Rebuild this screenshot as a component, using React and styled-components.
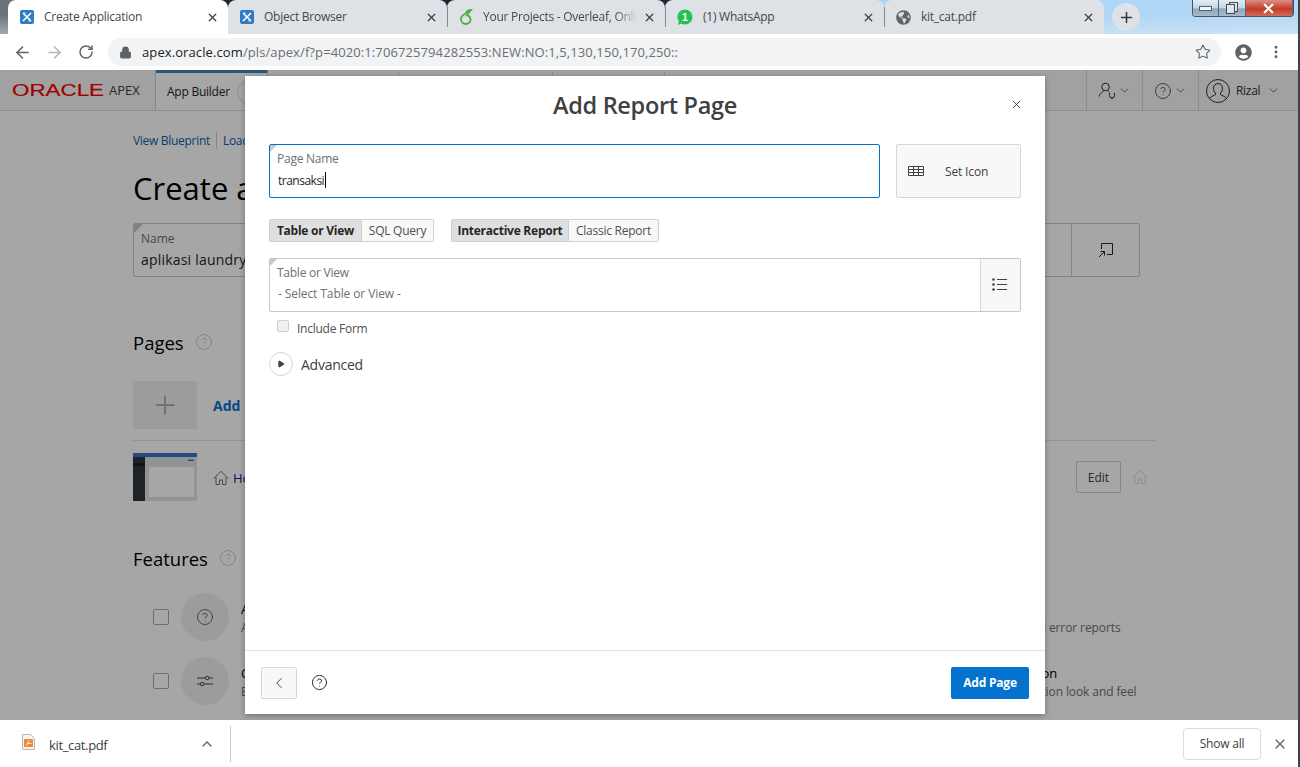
import React from 'react';
import styled, { createGlobalStyle, css } from 'styled-components';
import { ArrowLeft, ArrowRight, RotateCw, Lock, Star, EllipsisVertical, Plus, X, ChevronDown, ChevronLeft, ChevronUp, CircleHelp, Play } from 'lucide-react';
import { FaGlobeAmericas, FaUserCircle } from 'react-icons/fa';

const FONT = '"Open Sans", "Noto Sans", "Liberation Sans", sans-serif';

const GlobalStyle = createGlobalStyle`
  html, body { margin: 0; padding: 0; background: #fff; overflow: hidden; }
  * { box-sizing: border-box; }
  body { font-family: ${FONT}; font-size: 12px; color: #404040; }
`;

const Window = styled.div`
  width: 1300px;
  height: 767px;
  display: flex;
  flex-direction: column;
  overflow: hidden;
  border-right: 2px solid #3d4449;
`;

/* browser chrome */
const TabStrip = styled.div`
  height: 34px;
  flex: none;
  display: flex;
  align-items: flex-start;
  padding-left: 8px;
  background:
    linear-gradient(180deg, transparent 45%, rgba(232, 236, 240, 0.45) 100%),
    linear-gradient(90deg, #6c7379 0, #6c7379 8px, #1b2735 17%, #1b2735 51%, #a8d4fa 68%, #b4d8f6 100%);
`;

const Tab = styled.div`
  position: relative;
  width: ${({ $w }) => $w}px;
  height: 34px;
  flex: none;
  display: flex;
  align-items: center;
  padding: 0 9px 0 12px;
  gap: 10px;
  border-radius: 8px 8px 0 0;
  background: ${({ $active }) => ($active ? '#fff' : '#dee1e6')};
  ${({ $sep }) => $sep && css`
    &::before {
      content: '';
      position: absolute;
      left: 0;
      top: 7px;
      height: 20px;
      width: 1px;
      background: #85888c;
    }
  `}
`;

const TabTitle = styled.span`
  flex: 1;
  min-width: 0;
  font-size: 12px;
  line-height: 16px;
  letter-spacing: -0.25px;
  color: #45484c;
  white-space: nowrap;
  overflow: hidden;
  ${({ $fade }) => $fade && css`
    mask-image: linear-gradient(90deg, #000 85%, transparent 100%);
  `}
`;

const TabClose = styled(X)`
  flex: none;
  width: 13px;
  height: 13px;
  margin-left: -5px;
  color: #3c4043;
`;

const NewTab = styled.div`
  width: 28px;
  height: 28px;
  margin: 3px 0 0 8px;
  border-radius: 50%;
  background: #dee1e6;
  display: flex;
  align-items: center;
  justify-content: center;
  color: #35383c;
`;

const WindowControls = styled.div`
  margin-left: auto;
  margin-right: 4px;
  height: 17px;
  width: 102px;
  display: flex;
  overflow: hidden;
  border: 1px solid #4b5560;
  border-top: none;
  border-radius: 0 0 4px 4px;
`;

const WindowButton = styled.div`
  width: ${({ $wide }) => ($wide ? '48px' : '27px')};
  display: flex;
  align-items: center;
  justify-content: center;
  border-right: 1px solid #5d6a77;
  background: ${({ $wide }) => ($wide
    ? 'linear-gradient(180deg, #dc8f83 0, #c43c2a 55%, #cf6a58 100%)'
    : 'linear-gradient(180deg, #e3edf6 0, #c4d5e4 50%, #90a7bd 55%, #a6bacb 100%)')};
`;

const Toolbar = styled.div`
  height: 36px;
  flex: none;
  display: flex;
  align-items: center;
  background: #fff;
  padding: 0 0 0 12px;
`;

const NavButton = styled.div`
  width: 20px;
  height: 20px;
  margin-right: 12px;
  display: flex;
  align-items: center;
  justify-content: center;
  color: ${({ $off }) => ($off ? '#b4b6b9' : '#5f6368')};
`;

const Omnibox = styled.div`
  width: 1113px;
  height: 28px;
  padding: 0 10px 0 11px;
  display: flex;
  align-items: center;
  border-radius: 14px;
  background: #f1f3f4;
  color: #5f6368;
`;

const Url = styled.span`
  flex: 1;
  margin-left: 10px;
  font-size: 13px;
  letter-spacing: 0.1px;
  white-space: nowrap;
  color: #6a6e72;
  b { font-weight: 400; color: #202124; }
`;

const ToolbarIcon = styled.div`
  width: 20px;
  margin-left: ${({ $gap }) => $gap || 12}px;
  display: flex;
  justify-content: center;
  color: #5f6368;
`;

/* page behind the dialog */
const Page = styled.div`
  position: relative;
  height: 650px;
  flex: none;
  overflow: hidden;
  background: #fff;
`;

const Scrim = styled.div`
  position: absolute;
  inset: 0;
  background: rgba(0, 0, 0, 0.35);
`;

const AppHeader = styled.div`
  height: 41px;
  display: flex;
  align-items: stretch;
  background: #f8f8f8;
  border-bottom: 1px solid #d8d8d8;
`;

const LogoCell = styled.div`
  width: 156px;
  display: flex;
  align-items: center;
  padding-left: 12px;
  border-right: 1px solid #d0d0d0;
  color: #404040;
  font-size: 13px;
  span { margin-left: 5px; letter-spacing: 0; }
`;

const NavTab = styled.div`
  width: ${({ $w }) => $w}px;
  display: flex;
  align-items: center;
  gap: 7px;
  padding: 0 11px;
  font-size: 12px;
  letter-spacing: -0.25px;
  color: #262626;
  background: ${({ $active }) => ($active ? '#fff' : 'transparent')};
  border-right: 1px solid #d0d0d0;
  border-top: 3px solid ${({ $active }) => ($active ? '#3f85c2' : 'transparent')};
  white-space: nowrap;
`;

const NavChevron = styled.span`
  width: 24px;
  height: 24px;
  flex: none;
  display: flex;
  align-items: center;
  justify-content: center;
  border: 1px solid #d8d8d8;
  border-radius: 50%;
`;

const HeaderRight = styled.div`
  margin-left: auto;
  display: flex;
`;

const HeaderCell = styled.div`
  width: ${({ $w }) => $w}px;
  display: flex;
  align-items: center;
  gap: ${({ $gap }) => $gap || 2}px;
  padding: 1px 0 0 ${({ $pad }) => $pad}px;
  border-left: 1px solid #d8d8d8;
  color: #303030;
  font-size: 12px;
  letter-spacing: -0.3px;
`;

const Main = styled.div`
  width: 1023px;
  margin-left: 133px;
  padding-top: 19px;
`;

const Crumbs = styled.div`
  height: 20px;
  display: flex;
  align-items: center;
  font-size: 12px;
  letter-spacing: -0.3px;
  color: #0b5fa5;
  a + a {
    margin-left: 6px;
    padding-left: 6px;
    border-left: 1px solid #ccc;
  }
`;

const PageTitle = styled.h1`
  margin: 18px 0 0;
  font-size: 31px;
  line-height: 40px;
  font-weight: 400;
  color: #000;
`;

const NameField = styled.div`
  position: relative;
  width: 1007px;
  height: 54px;
  margin-top: 15px;
  display: flex;
  border: 1px solid #c8c8c8;
  border-radius: 2px;
  &::before {
    content: '';
    position: absolute;
    left: 0;
    top: 0;
    border-top: 9px solid #c8c8c8;
    border-right: 9px solid transparent;
  }
`;

const NameText = styled.div`
  flex: 1;
  padding: 7px 7px;
  label { display: block; font-size: 12px; line-height: 16px; color: #707070; }
  div { margin-top: 1px; font-size: 14px; line-height: 24px; letter-spacing: 0.2px; color: #262626; }
`;

const NameAction = styled.div`
  width: 68px;
  display: flex;
  align-items: center;
  justify-content: center;
  border-left: 1px solid #c8c8c8;
`;

const SectionHead = styled.div`
  display: flex;
  align-items: center;
  gap: 11px;
  height: 28px;
  margin-top: ${({ $top }) => $top}px;
  font-size: 18.5px;
  color: #000;
`;

const AddRow = styled.div`
  display: flex;
  align-items: center;
  gap: 16px;
  margin-top: 25px;
  padding-bottom: 11px;
  border-bottom: 1px solid #e4e4e4;
  font-size: 14px;
  font-weight: 700;
  word-spacing: 3px;
  color: #0572ce;
`;

const AddTile = styled.div`
  width: 64px;
  height: 48px;
  display: flex;
  align-items: center;
  justify-content: center;
  background: #f0f0f0;
  color: #a8a8a8;
`;

const HomeRow = styled.div`
  display: flex;
  align-items: center;
  margin-top: 12px;
  padding-right: 8px;
`;

const HomeLink = styled.div`
  display: flex;
  align-items: center;
  gap: 4px;
  margin-left: 16px;
  padding-top: 1px;
  font-size: 13px;
  color: #4b0082;
`;

const EditButton = styled.div`
  width: 45px;
  height: 32px;
  margin-left: auto;
  margin-right: 11px;
  display: flex;
  align-items: center;
  justify-content: center;
  border: 1px solid #cfcfcf;
  border-radius: 2px;
  font-size: 12px;
  color: #404040;
`;

const FeatureGrid = styled.div`
  display: grid;
  grid-template-columns: 684px 1fr;
  row-gap: 16px;
  margin-top: 21px;
  padding-left: 20px;
`;

const Feature = styled.div`
  display: flex;
  align-items: center;
  height: 48px;
`;

const FeatureCheck = styled.div`
  width: 16px;
  height: 16px;
  flex: none;
  border: 1px solid #aaa;
  border-radius: 2px;
  background: #fff;
`;

const FeatureBadge = styled.div`
  width: 48px;
  height: 48px;
  flex: none;
  margin: 0 12px;
  display: flex;
  align-items: center;
  justify-content: center;
  border-radius: 50%;
  background: #f0f0f0;
  color: #404040;
`;

const FeatureText = styled.div`
  margin-top: 4px;
  white-space: nowrap;
  strong { display: block; font-weight: 400; font-size: 13px; line-height: 18px; color: #000; }
  span { display: block; font-size: 12px; line-height: 20px; color: #707070; letter-spacing: -0.1px; }
`;

/* dialog */
const Dialog = styled.div`
  position: absolute;
  left: 245px;
  top: 6px;
  width: 800px;
  height: 638px;
  display: flex;
  flex-direction: column;
  background: #fff;
  box-shadow: 0 2px 6px rgba(0, 0, 0, 0.3);
`;

const DialogHead = styled.div`
  position: relative;
  height: 60px;
  flex: none;
  display: flex;
  align-items: center;
  justify-content: center;
`;

const DialogTitle = styled.h2`
  margin: 0 0 2px;
  font-size: 23.5px;
  line-height: 58px;
  font-weight: 600;
  letter-spacing: -0.3px;
  color: #404040;
`;

const DialogClose = styled(X)`
  position: absolute;
  right: 22px;
  top: 22px;
  width: 13px;
  height: 13px;
  color: #262626;
`;

const DialogBody = styled.div`
  flex: 1;
  padding: 8px 24px 0;
`;

const TopRow = styled.div`
  display: flex;
  gap: 16px;
`;

const Field = styled.div`
  position: relative;
  flex: 1;
  height: 54px;
  display: flex;
  border: 1px solid ${({ $focus }) => ($focus ? '#0572ce' : '#c8c8c8')};
  border-radius: 2px;
  margin-top: ${({ $top }) => $top || 0}px;
  &::before {
    content: '';
    position: absolute;
    left: 0;
    top: 0;
    border-top: 7px solid #c8c8c8;
    border-right: 7px solid transparent;
  }
`;

const FieldMain = styled.div`
  flex: 1;
  padding: 6px 7px 0;
`;

const FieldLabel = styled.div`
  font-size: 12px;
  line-height: 16px;
  letter-spacing: -0.25px;
  color: #707070;
`;

const FieldValue = styled.div`
  display: flex;
  align-items: center;
  height: 22px;
  margin-top: ${({ $muted }) => ($muted ? 1 : 2)}px;
  padding-left: 1px;
  font-size: 12px;
  letter-spacing: ${({ $muted }) => ($muted ? '-0.1px' : '-0.5px')};
  color: ${({ $muted }) => ($muted ? '#707070' : '#262626')};
`;

const Caret = styled.span`
  width: 1px;
  height: 16px;
  margin-left: 1px;
  background: #000;
`;

const PickerButton = styled.div`
  width: 40px;
  display: flex;
  align-items: center;
  justify-content: center;
  padding: 0 2px 2px 0;
  background: #f8f8f8;
  border-left: 1px solid #d8d8d8;
  color: #404040;
`;

const IconButton = styled.div`
  width: 125px;
  height: 54px;
  display: flex;
  align-items: center;
  gap: 21px;
  padding-left: 11px;
  background: #f8f8f8;
  border: 1px solid #d8d8d8;
  border-radius: 2px;
  font-size: 12px;
  letter-spacing: -0.15px;
  color: #404040;
`;

const RadioRow = styled.div`
  display: flex;
  gap: 17px;
  margin-top: 21px;
`;

const RadioGroup = styled.div`
  display: flex;
  height: 23px;
`;

const Radio = styled.div`
  width: ${({ $w }) => $w}px;
  display: flex;
  align-items: center;
  justify-content: center;
  font-size: 12px;
  letter-spacing: -0.25px;
  white-space: nowrap;
  border: 1px solid #d0d0d0;
  ${({ $on }) => ($on
    ? css`
      font-weight: 700;
      color: #262626;
      background: #dfdfdf;
      border-radius: 2px 0 0 2px;
    `
    : css`
      color: #505050;
      background: #f8f8f8;
      border-left: none;
      border-radius: 0 2px 2px 0;
    `)}
`;

const CheckRow = styled.div`
  display: flex;
  align-items: flex-start;
  gap: 8px;
  height: 16px;
  margin: 8px 0 0 8px;
  font-size: 12px;
  line-height: 18px;
  letter-spacing: -0.25px;
  color: #505050;
`;

const CheckBox = styled.span`
  width: 12px;
  height: 12px;
  border: 1px solid #d0d0d0;
  border-radius: 2px;
  background: #f0f0f0;
`;

const Advanced = styled.div`
  display: flex;
  align-items: center;
  gap: 8px;
  margin-top: 16px;
  font-size: 14px;
  letter-spacing: -0.25px;
  color: #404040;
`;

const AdvancedToggle = styled.div`
  width: 24px;
  height: 24px;
  display: flex;
  align-items: center;
  justify-content: center;
  border: 1px solid #d8d8d8;
  border-radius: 50%;
  color: #404040;
`;

const DialogFoot = styled.div`
  height: 64px;
  flex: none;
  display: flex;
  align-items: center;
  padding: 0 16px;
  border-top: 1px solid #e4e4e4;
`;

const BackButton = styled.div`
  width: 36px;
  height: 32px;
  display: flex;
  align-items: center;
  justify-content: center;
  background: #f8f8f8;
  border: 1px solid #d8d8d8;
  border-radius: 2px;
  color: #303030;
`;

const HelpButton = styled.div`
  margin-left: 14px;
  display: flex;
  color: #1c1c1c;
`;

const PrimaryButton = styled.div`
  width: 78px;
  height: 32px;
  margin-left: auto;
  display: flex;
  align-items: center;
  justify-content: center;
  background: #0572ce;
  border-radius: 2px;
  color: #fff;
  font-size: 12px;
  font-weight: 700;
  letter-spacing: -0.2px;
`;

/* download shelf */
const Shelf = styled.div`
  height: 47px;
  flex: none;
  display: flex;
  align-items: center;
  background: #fff;
  padding-left: 22px;
`;

const ShelfFile = styled.div`
  width: 208px;
  display: flex;
  align-items: center;
  padding-right: 15px;
  font-size: 13px;
  letter-spacing: -0.35px;
  color: #3c4043;
  span { margin-left: 14px; padding-top: 3px; flex: 1; }
`;

const ShelfDivider = styled.div`
  width: 1px;
  height: 36px;
  background: #c8c8c8;
`;

const ShowAll = styled.div`
  width: 78px;
  height: 32px;
  margin-left: auto;
  display: flex;
  align-items: center;
  justify-content: center;
  border: 1px solid #dadce0;
  border-radius: 4px;
  font-size: 12px;
  letter-spacing: -0.2px;
  color: #3c4043;
`;

const ShelfClose = styled.div`
  width: 37px;
  display: flex;
  justify-content: center;
  color: #5f6368;
`;

function ApexIcon() {
  return (
    <svg width="14" height="14" viewBox="0 0 14 14" style={{ flex: 'none' }}>
      <rect width="14" height="14" rx="2" fill="#2f7cc4" />
      <path d="M3 3l8 8M11 3l-8 8" stroke="#fff" strokeWidth="1.6" />
      <path d="M3 3h3M8 11h3" stroke="#bfe0ff" strokeWidth="1" />
    </svg>
  );
}

function OverleafIcon() {
  return (
    <svg width="14" height="16" viewBox="0 0 14 16" style={{ flex: 'none' }}>
      <path d="M12 1C9 1.500 7 3 6.200 5 3.500 6 2 8 2 10.300 2 13 4.200 15 6.800 15c2.700 0 4.700-2 4.700-4.500 0-2-1.500-3.700-3.500-4.200 .8-1.500 2-3 4-5.300z" fill="none" stroke="#4cae3a" strokeWidth="1.8" />
    </svg>
  );
}

function WhatsappIcon() {
  return (
    <svg width="16" height="17" viewBox="0 0 16 17" style={{ flex: 'none' }}>
      <path d="M8 .5a7.500 7.500 0 0 1 0 15c-1.300 0-2.500-.3-3.500-.9L.8 16l1.100-3.600A7.500 7.500 0 0 1 8 .5z" fill="#25c151" />
      <text x="8" y="12" textAnchor="middle" fontSize="10.500" fontWeight="700" fontFamily="Liberation Sans" fill="#fff">1</text>
    </svg>
  );
}

function OracleLogo() {
  return (
    <svg width="92" height="16" viewBox="0 0 92 16" style={{ flex: 'none' }}>
      <text x="0" y="13.500" fontFamily="Liberation Sans" fontSize="16" textLength="92" lengthAdjust="spacingAndGlyphs" fill="#f80000" stroke="#f80000" strokeWidth="0.2">ORACLE</text>
    </svg>
  );
}

function UserWrench() {
  return (
    <svg width="18" height="18" viewBox="0 0 18 18" fill="none" stroke="currentColor" strokeWidth="1">
      <circle cx="7.500" cy="5" r="3.800" />
      <path d="M5.500 8.500c0 2-4 2-4.500 6M9.500 8.500c.3.900 1.200 1.300 2 1.800" />
      <path d="M11.500 11v2.500a2.500 2.500 0 0 0 5 0V11M14 16v1.500" />
    </svg>
  );
}

function Avatar() {
  return (
    <svg width="24" height="24" viewBox="0 0 24 24" fill="none" stroke="currentColor" strokeWidth="1">
      <circle cx="12" cy="12" r="11.500" />
      <path d="M12 4.500c-2.800 0-4.500 2-4.500 4.800 0 2 .8 3.700 2 4.700v1.600c-1 1-4.500 1.300-5.500 3.600M12 4.500c2.800 0 4.500 2 4.500 4.800 0 2-.8 3.700-2 4.700v1.600c1 1 4.500 1.300 5.500 3.600" />
    </svg>
  );
}

function PopOut() {
  return (
    <svg width="16" height="16" viewBox="0 0 16 16" fill="none" stroke="#262626" strokeWidth="1">
      <path d="M3.500 7V1.500h11v11H9M1 15l5.500-5.500M2.500 9.500h4v4" />
    </svg>
  );
}

function HomeIcon({ color }) {
  return (
    <svg width="16" height="16" viewBox="0 0 16 16" fill="none" stroke={color} strokeWidth="1">
      <path d="M.8 8.500L8 1.200l7.200 7.300M3 7v7.500h3.500V10h3v4.500H13V7" />
    </svg>
  );
}

function Sliders() {
  return (
    <svg width="18" height="14" viewBox="0 0 18 14" fill="none" stroke="currentColor" strokeWidth="1">
      <path d="M1 4h8.500M13 4h4M1 10h3.500M8 10h9" />
      <circle cx="11.200" cy="4" r="1.800" />
      <circle cx="6.200" cy="10" r="1.800" />
    </svg>
  );
}

function TableIcon() {
  return (
    <svg width="16" height="10" viewBox="0 0 16 10" fill="none" stroke="#404040" strokeWidth="1">
      <path d="M.5.500h15v9H.5zM.5 3.500h15M.5 6.500h15M5.500 .5v9M10.500 .5v9" />
    </svg>
  );
}

function ListIcon() {
  return (
    <svg width="15" height="13" viewBox="0 0 15 13" fill="currentColor">
      <circle cx="1.500" cy="1.500" r="1.300" />
      <circle cx="1.500" cy="6.500" r="1.300" />
      <circle cx="1.500" cy="11.500" r="1.300" />
      <path d="M5 1h10v1H5zM5 6h10v1H5zM5 11h10v1H5z" />
    </svg>
  );
}

function Thumbnail() {
  return (
    <svg width="64" height="48" viewBox="0 0 64 48" style={{ flex: 'none', display: 'block' }}>
      <rect width="64" height="48" fill="#dfe3e3" />
      <rect width="64" height="4" fill="#3a72c8" />
      <rect y="4" width="12" height="44" fill="#31363b" />
      <rect y="10" width="12" height="3" fill="#1d2124" />
      <rect x="55" y="6.500" width="6" height="1.500" fill="#3a72c8" />
      <rect x="16" y="14" width="45" height="30" fill="#fff" />
    </svg>
  );
}

function PdfIcon() {
  return (
    <svg width="13" height="16" viewBox="0 0 13 16" style={{ flex: 'none', marginTop: -3 }}>
      <path d="M.5.500h8l4 4v11H.5z" fill="#f4f4f4" stroke="#b8b8b8" />
      <rect x="2" y="5" width="9" height="8" fill="#f08a3c" />
      <path d="M4 11c2-1 3-3 2.500-4.500M5 9.500h4.500" stroke="#fff" strokeWidth="0.8" fill="none" />
    </svg>
  );
}

const tabs = [
  { title: 'Create Application', width: 220, icon: <ApexIcon />, active: true },
  { title: 'Object Browser', width: 219, icon: <ApexIcon /> },
  { title: 'Your Projects - Overleaf, Online LaTeX Editor', width: 218, icon: <OverleafIcon />, sep: true, fade: true },
  { title: '(1) WhatsApp', width: 219, icon: <WhatsappIcon />, sep: true },
  { title: 'kit_cat.pdf', width: 220, icon: <FaGlobeAmericas size={15} color="#5f6368" style={{ flex: 'none' }} />, sep: true },
];

const features = [
  { title: 'Access Control', text: 'Add role based user authentication', icon: <CircleHelp size={18} strokeWidth={1} /> },
  { title: 'Activity Reporting', text: 'Includes all usage and error reports' },
  { title: 'Configuration Options', text: 'Enable or disable application features', icon: <Sliders /> },
  { title: 'Theme Style Selection', text: 'Select default application look and feel' },
];

export default function App() {
  return (
    <Window>
      <GlobalStyle />
      <TabStrip>
        {tabs.map((tab) => (
          <Tab key={tab.title} $w={tab.width} $active={tab.active} $sep={tab.sep}>
            {tab.icon}
            <TabTitle $fade={tab.fade}>{tab.title}</TabTitle>
            <TabClose strokeWidth={2.4} />
          </Tab>
        ))}
        <NewTab><Plus size={17} strokeWidth={2.2} /></NewTab>
        <WindowControls>
          <WindowButton>
            <svg width="13" height="5"><rect x="0.500" y="0.500" width="12" height="4" fill="#f4f6f8" stroke="#55606b" /></svg>
          </WindowButton>
          <WindowButton>
            <svg width="12" height="12" fill="#dfe6ec" stroke="#444c54"><rect x="3.500" y="0.500" width="8" height="9" /><rect x="0.500" y="2.500" width="8" height="9" /></svg>
          </WindowButton>
          <WindowButton $wide>
            <X size={15} strokeWidth={3.5} color="#fff" />
          </WindowButton>
        </WindowControls>
      </TabStrip>

      <Toolbar>
        <NavButton><ArrowLeft size={19} strokeWidth={2} /></NavButton>
        <NavButton $off><ArrowRight size={19} strokeWidth={2} /></NavButton>
        <NavButton><RotateCw size={16} strokeWidth={2.2} /></NavButton>
        <Omnibox>
          <Lock size={13} fill="currentColor" strokeWidth={2} />
          <Url><b>apex.oracle.com</b>/pls/apex/f?p=4020:1:706725794282553:NEW:NO:1,5,130,150,170,250::</Url>
          <Star size={16} strokeWidth={1.6} />
        </Omnibox>
        <ToolbarIcon $gap={12}><FaUserCircle size={17} /></ToolbarIcon>
        <ToolbarIcon $gap={13}><EllipsisVertical size={16} strokeWidth={2.4} /></ToolbarIcon>
      </Toolbar>

      <Page>
        <AppHeader>
          <LogoCell><OracleLogo /><span>APEX</span></LogoCell>
          <NavTab $w={112} $active>App Builder <NavChevron><ChevronDown size={14} /></NavChevron></NavTab>
          <NavTab $w={131}>SQL Workshop</NavTab>
          <NavTab $w={154}>Team Development</NavTab>
          <NavTab $w={112}>Gallery</NavTab>
          <HeaderRight>
            <HeaderCell $w={56} $pad={11}><UserWrench /><ChevronDown size={13} strokeWidth={1.2} /></HeaderCell>
            <HeaderCell $w={56} $pad={11}><CircleHelp size={18} strokeWidth={1} /><ChevronDown size={13} strokeWidth={1.2} /></HeaderCell>
            <HeaderCell $w={100} $pad={7} $gap={6}><Avatar />Rizal<ChevronDown size={13} strokeWidth={1.2} style={{ marginLeft: 1 }} /></HeaderCell>
          </HeaderRight>
        </AppHeader>
        <Main>
          <Crumbs><a>View Blueprint</a><a>Load Blueprint</a></Crumbs>
          <PageTitle>Create an Application</PageTitle>
          <NameField>
            <NameText><label>Name</label><div>aplikasi laundry</div></NameText>
            <NameAction><PopOut /></NameAction>
          </NameField>
          <SectionHead $top={51}>Pages <CircleHelp size={18} strokeWidth={1} color="#bbb" /></SectionHead>
          <AddRow>
            <AddTile><Plus size={30} strokeWidth={1.4} /></AddTile>
            <span>Add Page</span>
          </AddRow>
          <HomeRow>
            <Thumbnail />
            <HomeLink><HomeIcon color="#707070" />Home</HomeLink>
            <EditButton>Edit</EditButton>
            <HomeIcon color="#d8d8d8" />
          </HomeRow>
          <SectionHead $top={43}>Features <CircleHelp size={18} strokeWidth={1} color="#bbb" /></SectionHead>
          <FeatureGrid>
            {features.map((f) => (
              <Feature key={f.title}>
                <FeatureCheck />
                <FeatureBadge>{f.icon}</FeatureBadge>
                <FeatureText><strong>{f.title}</strong><span>{f.text}</span></FeatureText>
              </Feature>
            ))}
          </FeatureGrid>
        </Main>

        <Scrim />

        <Dialog>
          <DialogHead>
            <DialogTitle>Add Report Page</DialogTitle>
            <DialogClose strokeWidth={1.5} />
          </DialogHead>
          <DialogBody>
            <TopRow>
              <Field $focus>
                <FieldMain>
                  <FieldLabel>Page Name</FieldLabel>
                  <FieldValue>transaksi<Caret /></FieldValue>
                </FieldMain>
              </Field>
              <IconButton><TableIcon /><span>Set Icon</span></IconButton>
            </TopRow>
            <RadioRow>
              <RadioGroup>
                <Radio $w={93} $on>Table or View</Radio>
                <Radio $w={72}>SQL Query</Radio>
              </RadioGroup>
              <RadioGroup>
                <Radio $w={118} $on>Interactive Report</Radio>
                <Radio $w={90}>Classic Report</Radio>
              </RadioGroup>
            </RadioRow>
            <TopRow>
              <Field $top={16}>
                <FieldMain>
                  <FieldLabel>Table or View</FieldLabel>
                  <FieldValue $muted>- Select Table or View -</FieldValue>
                </FieldMain>
                <PickerButton><ListIcon /></PickerButton>
              </Field>
            </TopRow>
            <CheckRow><CheckBox />Include Form</CheckRow>
            <Advanced>
              <AdvancedToggle><Play size={8} fill="currentColor" /></AdvancedToggle>
              Advanced
            </Advanced>
          </DialogBody>
          <DialogFoot>
            <BackButton><ChevronLeft size={18} strokeWidth={1.2} /></BackButton>
            <HelpButton><CircleHelp size={17} strokeWidth={1.3} /></HelpButton>
            <PrimaryButton>Add Page</PrimaryButton>
          </DialogFoot>
        </Dialog>
      </Page>

      <Shelf>
        <ShelfFile><PdfIcon /><span>kit_cat.pdf</span><ChevronUp size={16} strokeWidth={2} color="#5f6368" /></ShelfFile>
        <ShelfDivider />
        <ShowAll>Show all</ShowAll>
        <ShelfClose><X size={16} strokeWidth={2} /></ShelfClose>
      </Shelf>
    </Window>
  );
}
